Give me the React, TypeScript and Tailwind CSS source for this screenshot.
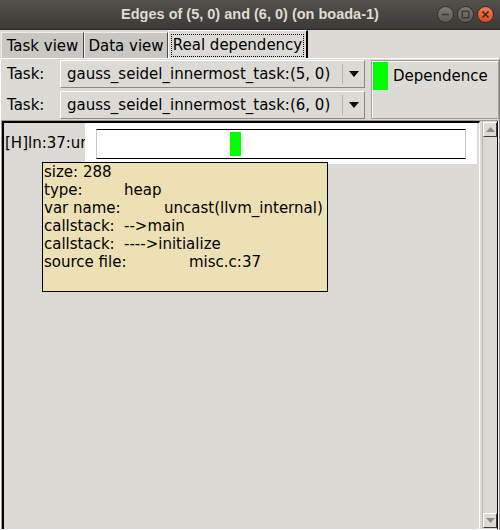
import { ReactNode } from 'react';

function WinButton({ kind }: { kind: 'min' | 'max' | 'close' }) {
  const close = kind === 'close';
  return (
    <div
      className={
        close
          ? 'w-[17px] h-[17px] rounded-full flex items-center justify-center bg-gradient-to-b from-[#f47a4c] to-[#df4a1b] border border-[#2e2d2a]'
          : 'w-[17px] h-[17px] rounded-full flex items-center justify-center bg-gradient-to-b from-[#7c7b75] to-[#5b5a55] border border-[#2e2d2a]'
      }
    >
      <svg width="9" height="9" viewBox="0 0 9 9">
        {kind === 'min' && <line x1="1" y1="4.5" x2="8" y2="4.5" stroke="#3a3935" strokeWidth="1.6" />}
        {kind === 'max' && <rect x="1.2" y="1.2" width="6.6" height="6.6" fill="none" stroke="#3a3935" strokeWidth="1.4" />}
        {close && (
          <g stroke="#3b2a22" strokeWidth="1.6">
            <line x1="1.5" y1="1.5" x2="7.5" y2="7.5" />
            <line x1="7.5" y1="1.5" x2="1.5" y2="7.5" />
          </g>
        )}
      </svg>
    </div>
  );
}

function TitleBar() {
  return (
    <div className="h-[30px] shrink-0 grid grid-cols-[1fr_auto_1fr] items-center bg-gradient-to-b from-[#52514c] to-[#3b3a36] border-b border-[#2b2a27]">
      <div />
      <span className="font-['Liberation_Sans',sans-serif] font-bold text-[14.5px] text-[#dfdbd2]">
        Edges of (5, 0) and (6, 0) (on boada-1)
      </span>
      <div className="flex justify-end gap-[3px] pr-[6px]">
        <WinButton kind="min" />
        <WinButton kind="max" />
        <WinButton kind="close" />
      </div>
    </div>
  );
}

function Tab({ label, width, active }: { label: string; width: string; active?: boolean }) {
  if (active) {
    return (
      <div className={`${width} h-[28px] flex items-center justify-center pt-[1px] bg-[#dcdad5] border-t border-l border-white border-r-2 border-r-black`}>
        <span className="px-[1px] leading-[21px] outline-1 outline-dotted outline-black">{label}</span>
      </div>
    );
  }
  return (
    <div className={`${width} h-[26px] flex items-center justify-center pt-[1px] bg-[#c9c7c2] border-t border-l border-[#eeede9] border-r border-r-[#4a4946]`}>
      {label}
    </div>
  );
}

function Combo({ text }: { text: string }) {
  return (
    <div className="w-[305px] h-[28px] flex items-center bg-[#dcdad5] border border-t-white border-l-white border-b-[#8b8984] border-r-[#8b8984]">
      <span className="flex-1 pl-[6px] whitespace-nowrap">{text}</span>
      <div className="w-[1px] h-[20px] bg-white border-l border-[#b5b3ae]" />
      <div className="w-[21px] flex items-center justify-center">
        <svg width="10" height="6" viewBox="0 0 10 6">
          <path d="M0 0 L10 0 L5 6 Z" fill="#000" />
        </svg>
      </div>
    </div>
  );
}

function ScrollArrow({ up }: { up?: boolean }) {
  return (
    <div className="h-[15px] flex items-center justify-center bg-[#dcdad5] border border-t-white border-l-white border-b-[#3c3c3c] border-r-[#3c3c3c]">
      <svg width="9" height="5" viewBox="0 0 9 5">
        <path d={up ? 'M0 5 L9 5 L4.5 0 Z' : 'M0 0 L9 0 L4.5 5 Z'} fill="#8d8b86" />
      </svg>
    </div>
  );
}

function TipLine({ label, w, children }: { label: string; w?: string; children?: ReactNode }) {
  return (
    <div className="flex whitespace-nowrap">
      <span className={w ?? ''}>{label}</span>
      {children}
    </div>
  );
}

export default function App() {
  return (
    <div className="w-[500px] h-[530px] flex flex-col overflow-hidden bg-[#dcdad5] font-['DejaVu_Sans',sans-serif] text-[15px] text-black">
      <TitleBar />

      {/* tabs */}
      <div className="h-[28px] shrink-0 flex items-end pl-[1px]">
        <Tab label="Task view" width="w-[83px]" />
        <Tab label="Data view" width="w-[84px]" />
        <Tab label="Real dependency" width="w-[140px]" active />
      </div>

      <div className="flex-1 flex flex-col border-t border-l border-white border-r border-r-[#8b8984]">
        {/* task selectors + legend */}
        <div className="flex pt-[1px]">
          <div className="flex flex-col gap-[3px]">
            <div className="flex items-center">
              <span className="w-[59px] pl-[6px]">Task:</span>
              <Combo text="gauss_seidel_innermost_task:(5, 0)" />
            </div>
            <div className="flex items-center">
              <span className="w-[59px] pl-[6px]">Task:</span>
              <Combo text="gauss_seidel_innermost_task:(6, 0)" />
            </div>
          </div>
          <div className="ml-[6px] flex-1 h-[59px] flex items-start gap-[5px] border border-[#a19f9a] shadow-[inset_1px_1px_0_#fff]">
            <div className="mt-[1px] ml-[1px] w-[15px] h-[28px] bg-[#00ff00]" />
            <span className="leading-[30px]">Dependence</span>
          </div>
        </div>

        {/* main view */}
        <div className="flex-1 mt-[1px] flex border-t border-l border-[#9d9b96] border-b border-r border-b-white border-r-white">
          <div className="flex-1 flex border-t-2 border-l-2 border-black border-r border-r-white">
            <div className="flex-1 relative overflow-hidden">
              <div className="flex h-[41px]">
                <div className="w-[81px] pl-[1px] overflow-hidden whitespace-nowrap leading-[41px]">
                  [H]ln:37:uncast(llvm_internal)
                </div>
                <div className="flex-1 bg-white pt-[6px] px-[11px]">
                  <div className="h-[30px] flex items-center border-t border-b border-black border-l border-r border-l-[#c8c8c8] border-r-[#c8c8c8]">
                    <div className="ml-[133px] w-[11px] h-[24px] bg-[#00ff00]" />
                  </div>
                </div>
                <div className="w-[2px]" />
              </div>

              {/* tooltip */}
              <div className="absolute left-[38px] top-[39px] w-[286px] h-[130px] bg-[#eee0b5] border border-black pl-[1px] leading-[18px]">
                <TipLine label="size: 288" />
                <TipLine label="type:" w="w-[80px]">heap</TipLine>
                <TipLine label="var name:" w="w-[120px]">uncast(llvm_internal)</TipLine>
                <TipLine label="callstack:" w="w-[80px]">--&gt;main</TipLine>
                <TipLine label="callstack:" w="w-[80px]">----&gt;initialize</TipLine>
                <TipLine label="source file:" w="w-[145px]">misc.c:37</TipLine>
              </div>
            </div>
          </div>

          {/* scrollbar */}
          <div className="w-[16px] ml-[2px] flex flex-col border-l border-[#b9b7b2] border-r border-r-black pt-[1px] pb-[1px]">
            <ScrollArrow up />
            <div className="flex-1" />
            <ScrollArrow />
          </div>
        </div>
      </div>
    </div>
  );
}
